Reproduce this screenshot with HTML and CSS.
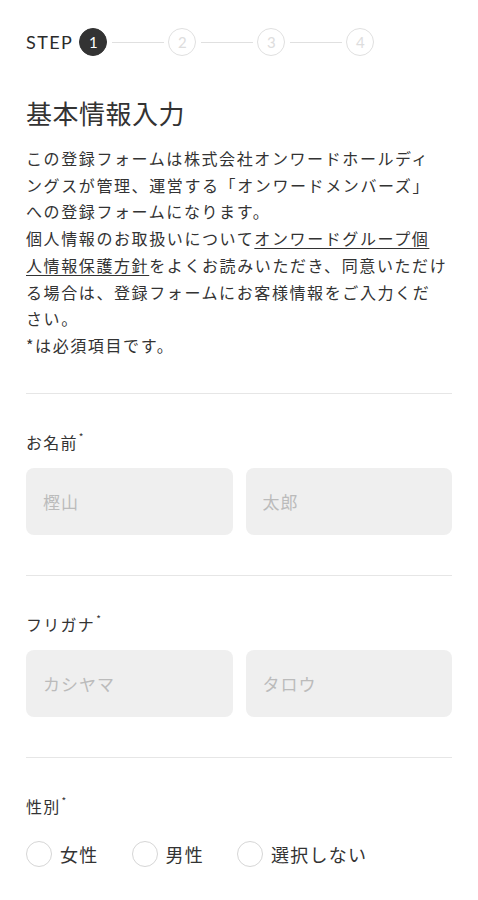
FILE: index.html
```html
<!DOCTYPE html>
<html lang="ja">
<head>
  <meta charset="UTF-8">
  <meta name="viewport" content="width=device-width, initial-scale=1.0">
  <title>基本情報入力</title>
  <link rel="stylesheet" href="styles.css">
</head>
<body>
  <div class="container">
    <div class="steps">
      <span class="steps-label">STEP</span>
      <span class="step active">1</span>
      <span class="step-line"></span>
      <span class="step">2</span>
      <span class="step-line"></span>
      <span class="step">3</span>
      <span class="step-line"></span>
      <span class="step">4</span>
    </div>

    <h1 class="title">基本情報入力</h1>
    <p class="intro">
      この登録フォームは株式会社オンワードホールディ<br>ングスが管理、運営する「オンワードメンバーズ」<br>への登録フォームになります。<br>
      個人情報のお取扱いについて<a href="#" class="policy">オンワードグループ個<br>人情報保護方針</a>をよくお読みいただき、同意いただけ<br>る場合は、登録フォームにお客様情報をご入力くだ<br>さい。<br>
      *は必須項目です。
    </p>

    <div class="field">
      <label class="field-label">お名前<span class="req">*</span></label>
      <div class="pair">
        <input type="text" class="text-input" placeholder="樫山">
        <input type="text" class="text-input" placeholder="太郎">
      </div>
    </div>

    <div class="field">
      <label class="field-label">フリガナ<span class="req">*</span></label>
      <div class="pair">
        <input type="text" class="text-input" placeholder="カシヤマ">
        <input type="text" class="text-input" placeholder="タロウ">
      </div>
    </div>

    <div class="field">
      <label class="field-label">性別<span class="req">*</span></label>
      <div class="radios">
        <label class="radio"><input type="radio" name="gender"><span class="radio-mark"></span>女性</label>
        <label class="radio"><input type="radio" name="gender"><span class="radio-mark"></span>男性</label>
        <label class="radio"><input type="radio" name="gender"><span class="radio-mark"></span>選択しない</label>
      </div>
    </div>
  </div>
</body>
</html>
```

FILE: styles.css
```css
body {
  font-family: "Noto Sans CJK JP", "Noto Sans", sans-serif;
  background-color: #fff;
  color: #333;
  margin: 0;
  padding: 0;
}
.container {
  padding: 28px 26px 0;
}
.steps {
  display: flex;
  align-items: center;
  height: 28px;
}
.steps-label {
  font-family: Lato, "Noto Sans", sans-serif;
  font-weight: 400;
  font-size: 18px;
  letter-spacing: 0.08em;
  color: #2b2b2b;
  margin-right: 6px;
}
.step {
  width: 28px;
  height: 28px;
  box-sizing: border-box;
  border: 1.5px solid #e0e0e0;
  border-radius: 50%;
  display: flex;
  align-items: center;
  justify-content: center;
  font-family: Lato, sans-serif;
  font-size: 15px;
  color: #ddd;
}
.step.active {
  background-color: #333;
  border-color: #333;
  color: #fff;
}
.step-line {
  width: 52px;
  height: 1px;
  background-color: #e0e0e0;
  margin: 0 4.5px;
}
.title {
  font-size: 26px;
  font-weight: 400;
  line-height: 36px;
  letter-spacing: 0.02em;
  margin: 39px 0 14px;
  color: #333;
}
.intro {
  font-size: 16px;
  line-height: 26.7px;
  letter-spacing: 0.1em;
  margin: 0 0 34px;
  color: #333;
}
.policy {
  color: #333;
  text-decoration: underline;
  text-underline-offset: 3px;
}
.field {
  border-top: 1.5px solid #e6e6e6;
  padding: 36px 0 40px;
}
.field-label {
  display: block;
  font-size: 16px;
  line-height: 24px;
  letter-spacing: 0.08em;
}
.req {
  font-size: 10px;
  vertical-align: top;
  line-height: 14px;
  margin-left: 1px;
}
.pair {
  display: flex;
  gap: 13px;
  margin-top: 14px;
}
.text-input {
  flex: 1;
  min-width: 0;
  height: 67px;
  box-sizing: border-box;
  border: none;
  border-radius: 8px;
  background-color: #efefef;
  padding: 0 17px;
  font-family: inherit;
  font-size: 17px;
  color: #333;
}
.text-input::placeholder {
  color: #bbb;
  letter-spacing: 0.06em;
}
.radios {
  display: flex;
  gap: 33px;
  margin-top: 23px;
}
.radio {
  display: flex;
  align-items: center;
  font-size: 18px;
  letter-spacing: 0.07em;
  color: #333;
}
.radio input {
  display: none;
}
.radio-mark {
  width: 26px;
  height: 26px;
  box-sizing: border-box;
  border: 1.5px solid #d6d6d6;
  border-radius: 50%;
  margin-right: 8px;
}
```
